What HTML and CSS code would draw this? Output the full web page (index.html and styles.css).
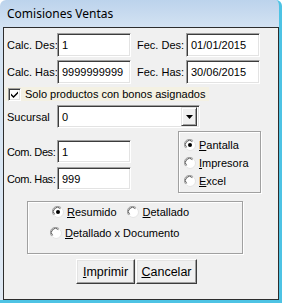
FILE: index.html
```html
<!DOCTYPE html>
<html lang="es">
<head>
    <meta charset="UTF-8">
    <title>Comisiones Ventas</title>
    <link rel="stylesheet" href="styles.css">
</head>
<body>
    <svg width="0" height="0" class="defs">
        <symbol id="radio" viewBox="0 0 12 12">
            <circle cx="6" cy="6" r="5.5" fill="#fff"/>
            <path d="M1.8 9.2 A4.9 4.9 0 0 1 9.2 1.8" fill="none" stroke="#a0a0a0" stroke-width="1"/>
            <path d="M2.6 8.4 A3.9 3.9 0 0 1 8.4 2.6" fill="none" stroke="#555" stroke-width="1"/>
            <path d="M9.9 2.4 A5.2 5.2 0 0 1 2.4 9.9" fill="none" stroke="#e3e3e3" stroke-width="1"/>
        </symbol>
    </svg>

    <div class="window">
        <div class="titlebar">Comisiones Ventas</div>
        <div class="frame">
            <div class="client">
                <div class="row">
                    <span class="lbl">Calc. Des:</span>
                    <div class="field w74">1</div>
                    <span class="lbl lbl-right">Fec. Des:</span>
                    <div class="field w74">01/01/2015</div>
                </div>
                <div class="row">
                    <span class="lbl">Calc. Has:</span>
                    <div class="field w74">9999999999</div>
                    <span class="lbl lbl-right">Fec. Has:</span>
                    <div class="field w74">30/06/2015</div>
                </div>

                <div class="check-row">
                    <span class="checkbox">
                        <svg width="9" height="9" viewBox="0 0 9 9"><path d="M1 3.5 L3.5 6 L8 1.5 L8 3.5 L3.5 8 L1 5.5 Z" fill="#000"/></svg>
                    </span>
                    <span>Solo productos con bonos asignados</span>
                </div>

                <div class="row sucursal-row">
                    <span class="lbl">Sucursal</span>
                    <div class="field combo">
                        <span>0</span>
                        <span class="drop-btn">
                            <svg width="7" height="4" viewBox="0 0 7 4"><path d="M0 0 H7 L3.5 4 Z" fill="#000"/></svg>
                        </span>
                    </div>
                </div>

                <div class="mid">
                    <div class="com-col">
                        <div class="row">
                            <span class="lbl lbl-tight">Com. Des:</span>
                            <div class="field w74">1</div>
                        </div>
                        <div class="row">
                            <span class="lbl lbl-tight">Com. Has:</span>
                            <div class="field w74">999</div>
                        </div>
                    </div>
                    <div class="group output-group">
                        <div class="radio-row">
                            <span class="radio checked"><svg width="12" height="12"><use href="#radio"/></svg></span>
                            <span><u>P</u>antalla</span>
                        </div>
                        <div class="radio-row">
                            <span class="radio"><svg width="12" height="12"><use href="#radio"/></svg></span>
                            <span><u>I</u>mpresora</span>
                        </div>
                        <div class="radio-row">
                            <span class="radio"><svg width="12" height="12"><use href="#radio"/></svg></span>
                            <span><u>E</u>xcel</span>
                        </div>
                    </div>
                </div>

                <div class="group detail-group">
                    <div class="radio-row first">
                        <span class="radio checked"><svg width="12" height="12"><use href="#radio"/></svg></span>
                        <span class="opt-resumido"><u>R</u>esumido</span>
                        <span class="radio"><svg width="12" height="12"><use href="#radio"/></svg></span>
                        <span class="opt-detallado"><u>D</u>etallado</span>
                    </div>
                    <div class="radio-row second">
                        <span class="radio"><svg width="12" height="12"><use href="#radio"/></svg></span>
                        <span><u>D</u>etallado x Documento</span>
                    </div>
                </div>

                <div class="buttons">
                    <button class="btn btn-print"><u>I</u>mprimir</button>
                    <button class="btn btn-cancel"><u>C</u>ancelar</button>
                </div>
            </div>
        </div>
    </div>
</body>
</html>
```

FILE: styles.css
```css
body {
    margin: 0;
    padding: 0;
    background-color: #ffffff;
    font-family: 'Liberation Sans', Arial, sans-serif;
    font-size: 11px;
    color: #000;
}

.defs {
    position: absolute;
}

.window {
    width: 282px;
    height: 303px;
    box-sizing: border-box;
    border-right: 3px solid #4ec3e4;
    border-bottom: 3px solid #4ec3e4;
    border-radius: 6px 6px 0 0;
    background: linear-gradient(#bcd3ec, #d3e2f2 27px, #dfe9f4);
    overflow: hidden;
}

.titlebar {
    height: 27px;
    line-height: 27px;
    padding-left: 7px;
    font-family: 'Noto Sans', sans-serif;
    font-size: 12px;
    color: #000;
}

.frame {
    padding-left: 3px;
}

.client {
    width: 276px;
    height: 273px;
    box-sizing: border-box;
    border: 1px solid #2d2d2d;
    background-color: #f0f0f0;
    padding: 5px 0 0 3px;
}

.row {
    display: flex;
    align-items: center;
    height: 24px;
    margin-bottom: 3px;
}

.lbl {
    width: 50px;
    white-space: nowrap;
}

.lbl-tight {
    letter-spacing: -0.4px;
}

.lbl-right {
    margin-left: 6px;
    width: 49px;
}

.field {
    height: 24px;
    box-sizing: border-box;
    background-color: #fff;
    border: 1px solid;
    border-color: #a0a0a0 #fff #fff #a0a0a0;
    box-shadow: inset 1px 1px 0 #3c3c3c, inset -1px -1px 0 #e3e3e3;
    padding-left: 4px;
    display: flex;
    align-items: center;
}

.w74 {
    width: 74px;
}

.check-row {
    display: flex;
    align-items: center;
    width: 201px;
    height: 14px;
    margin: 2px 0 0 -2px;
    padding-left: 3px;
    background-color: #f4f1e3;
}

.checkbox {
    width: 13px;
    height: 13px;
    box-sizing: border-box;
    background-color: #fff;
    border: 1px solid;
    border-color: #a0a0a0 #fff #fff #a0a0a0;
    box-shadow: inset 1px 1px 0 #3c3c3c, inset -1px -1px 0 #e3e3e3;
    display: flex;
    align-items: center;
    justify-content: center;
    margin-right: 4px;
}

.sucursal-row {
    margin-top: 4px;
    height: 23px;
    margin-bottom: 0;
}

.combo {
    width: 143px;
    height: 23px;
    justify-content: space-between;
    padding-right: 2px;
}

.drop-btn {
    width: 16px;
    height: 19px;
    box-sizing: border-box;
    background-color: #f0f0f0;
    border: 1px solid;
    border-color: #e3e3e3 #3c3c3c #3c3c3c #e3e3e3;
    box-shadow: inset 1px 1px 0 #fff, inset -1px -1px 0 #a0a0a0;
    display: flex;
    align-items: center;
    justify-content: center;
}

.mid {
    display: flex;
    margin-top: 3px;
}

.com-col {
    width: 124px;
    padding-top: 9px;
}

.com-col .row {
    height: 23px;
    margin-bottom: 4px;
}

.com-col .field {
    height: 23px;
}

.group {
    box-sizing: border-box;
    border: 1px solid #a0a0a0;
    box-shadow: inset 1px 1px 0 #fff, 1px 1px 0 #fff;
}

.output-group {
    width: 83px;
    height: 62px;
    margin-left: 47px;
    padding: 4px 0 0 5px;
}

.radio-row {
    display: flex;
    align-items: center;
    height: 18px;
}

.radio {
    width: 12px;
    height: 12px;
    position: relative;
    margin-right: 3px;
}

.radio svg {
    display: block;
}

.radio.checked::after {
    content: "";
    position: absolute;
    left: 4px;
    top: 4px;
    width: 4px;
    height: 4px;
    border-radius: 50%;
    background-color: #000;
}

.detail-group {
    width: 216px;
    height: 53px;
    margin: 7px 0 0 20px;
    padding-top: 1px;
}

.detail-group .first {
    padding-left: 24px;
}

.detail-group .second {
    padding-left: 22px;
    margin-top: 3px;
}

.opt-resumido {
    margin-right: 10px;
}

.detail-group .first .radio + .opt-detallado {
    margin-left: 1px;
}

.buttons {
    display: flex;
    gap: 1px;
    margin: 5px 0 0 69px;
}

.btn {
    height: 25px;
    box-sizing: border-box;
    font-family: 'Liberation Sans', Arial, sans-serif;
    font-size: 12.5px;
    color: #000;
    background-color: #f0f0f0;
    border: 1px solid;
    border-color: #fff #3c3c3c #3c3c3c #fff;
    box-shadow: inset -1px -1px 0 #a0a0a0, inset 1px 1px 0 #e3e3e3;
    padding: 0;
}

.btn-print {
    width: 59px;
}

.btn-cancel {
    width: 61px;
}
```
